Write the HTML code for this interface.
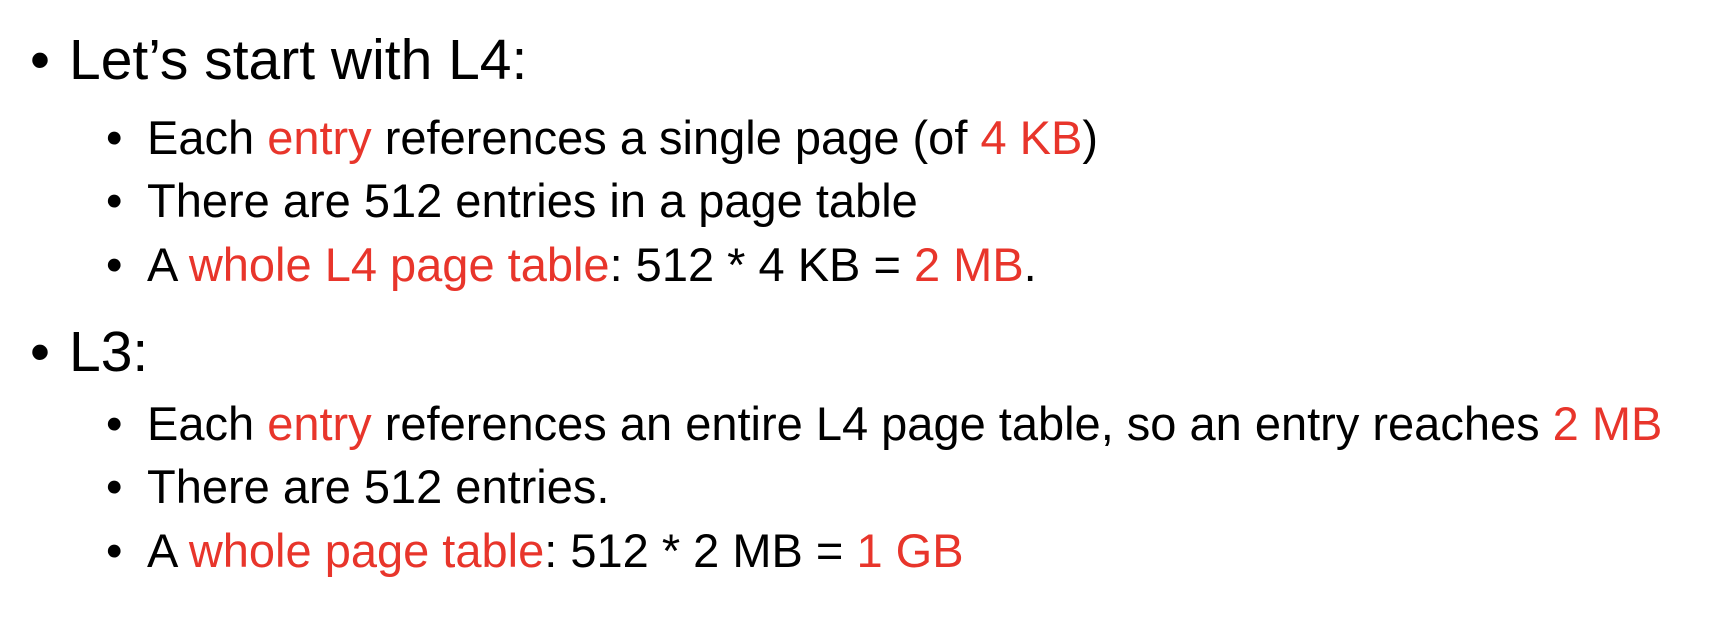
<!DOCTYPE html>
<html><head><meta charset="utf-8"><style>
body{margin:0;width:1726px;height:642px;background:#fff;position:relative;overflow:hidden;font-family:"Liberation Sans",sans-serif;color:#000}
.l{position:absolute;line-height:1;white-space:nowrap}
.m{font-size:57px}
.s{font-size:47px}
.r{color:#e8352b}
</style></head><body>
<div class="l m" style="left:30px;top:32px">•</div>
<div class="l m" style="left:69px;top:32px">Let’s start with L4:</div>
<div class="l s" style="left:106px;top:114px">•</div>
<div class="l s" style="left:147px;top:114px">Each <span class="r">entry</span> references a single page (of <span class="r">4 KB</span>)</div>
<div class="l s" style="left:106px;top:177px">•</div>
<div class="l s" style="left:147px;top:177px">There are 512 entries in a page table</div>
<div class="l s" style="left:106px;top:241px">•</div>
<div class="l s" style="left:147px;top:241px">A <span class="r">whole L4 page table</span>: 512 * 4 KB = <span class="r">2 MB</span>.</div>
<div class="l m" style="left:30px;top:324px">•</div>
<div class="l m" style="left:69px;top:324px">L3:</div>
<div class="l s" style="left:106px;top:400px">•</div>
<div class="l s" style="left:147px;top:400px">Each <span class="r">entry</span> references an entire L4 page table, so an entry reaches <span class="r">2 MB</span></div>
<div class="l s" style="left:106px;top:463px">•</div>
<div class="l s" style="left:147px;top:463px">There are 512 entries.</div>
<div class="l s" style="left:106px;top:527px">•</div>
<div class="l s" style="left:147px;top:527px">A <span class="r">whole page table</span>: 512 * 2 MB = <span class="r">1 GB</span></div>
</body></html>
